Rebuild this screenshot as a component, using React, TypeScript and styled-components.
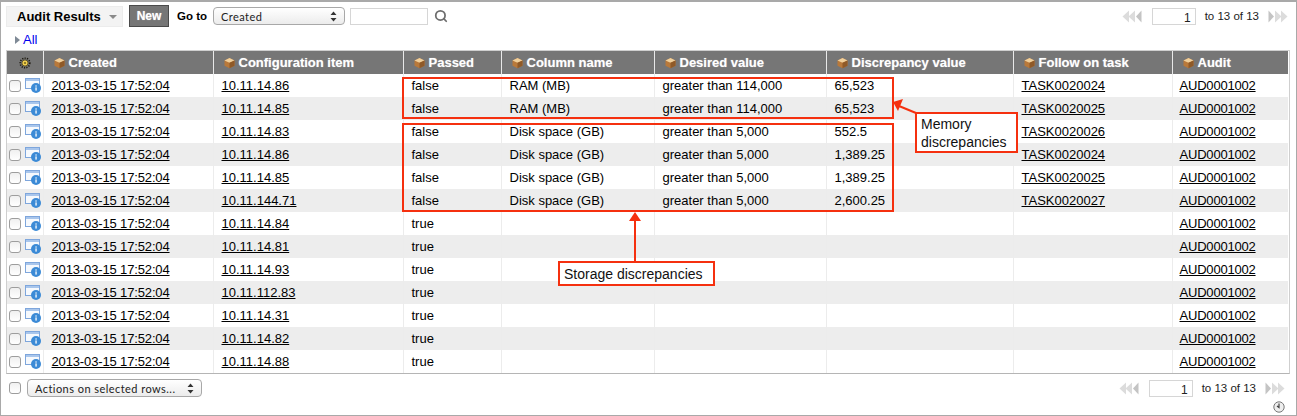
import React from 'react';
import styled, { createGlobalStyle } from 'styled-components';
import { Search } from 'lucide-react';

const GlobalStyle = createGlobalStyle`
  html, body { margin: 0; padding: 0; background: #fff; }
  body { font-family: "Liberation Sans", Arial, sans-serif; font-size: 13px; color: #000; }
`;

interface AuditRow {
  ci: string;
  passed: string;
  column?: string;
  desired?: string;
  discrepancy?: string;
  task?: string;
}

const rows: AuditRow[] = [
  { ci: '10.11.14.86', passed: 'false', column: 'RAM (MB)', desired: 'greater than 114,000', discrepancy: '65,523', task: 'TASK0020024' },
  { ci: '10.11.14.85', passed: 'false', column: 'RAM (MB)', desired: 'greater than 114,000', discrepancy: '65,523', task: 'TASK0020025' },
  { ci: '10.11.14.83', passed: 'false', column: 'Disk space (GB)', desired: 'greater than 5,000', discrepancy: '552.5', task: 'TASK0020026' },
  { ci: '10.11.14.86', passed: 'false', column: 'Disk space (GB)', desired: 'greater than 5,000', discrepancy: '1,389.25', task: 'TASK0020024' },
  { ci: '10.11.14.85', passed: 'false', column: 'Disk space (GB)', desired: 'greater than 5,000', discrepancy: '1,389.25', task: 'TASK0020025' },
  { ci: '10.11.144.71', passed: 'false', column: 'Disk space (GB)', desired: 'greater than 5,000', discrepancy: '2,600.25', task: 'TASK0020027' },
  { ci: '10.11.14.84', passed: 'true' },
  { ci: '10.11.14.81', passed: 'true' },
  { ci: '10.11.14.93', passed: 'true' },
  { ci: '10.11.112.83', passed: 'true' },
  { ci: '10.11.14.31', passed: 'true' },
  { ci: '10.11.14.82', passed: 'true' },
  { ci: '10.11.14.88', passed: 'true' },
];

const columns = ['Created', 'Configuration item', 'Passed', 'Column name', 'Desired value', 'Discrepancy value', 'Follow on task', 'Audit'];
const widths = [36, 170, 190, 98, 153, 172, 187, 159, 116];

const BoxIcon = () => (
  <svg width="11" height="12" viewBox="0 0 11 12">
    <path d="M5.5 1 L10.5 3.4 V8.8 L5.5 11.3 L.5 8.8 V3.4 Z" fill="#b9793a" />
    <path d="M5.5 1 L10.5 3.4 L5.5 5.8 L.5 3.4 Z" fill="#f0cf9a" />
    <path d="M5.5 5.8 L10.5 3.4 V8.8 L5.5 11.3 Z" fill="#8f5a28" />
  </svg>
);

const GearIcon = () => (
  <svg width="12" height="12" viewBox="0 0 12 12">
    <circle cx="6" cy="6" r="4.8" fill="none" stroke="#1d1a10" strokeWidth="1.6" strokeDasharray="1.2 1.2" />
    <circle cx="6" cy="6" r="3.1" fill="#f2d050" stroke="#2e2810" strokeWidth=".7" />
    <circle cx="6" cy="6" r="1.1" fill="#77681f" />
  </svg>
);

const RecordIcon = () => (
  <svg width="16" height="15" viewBox="0 0 16 15">
    <rect x=".5" y=".5" width="14" height="10" fill="#f6f9fd" stroke="#7ea6dc" />
    <rect x="1" y="1" width="13" height="2" fill="#a9c6ec" />
    <circle cx="11" cy="10" r="5" fill="#3b8ad6" />
    <rect x="10.4" y="9.4" width="1.3" height="3.2" fill="#fff" />
    <rect x="10.4" y="7.4" width="1.3" height="1.2" fill="#fff" />
  </svg>
);

const PagerArrows = ({ dir }: { dir: 'left' | 'right' }) => (
  <svg width="20" height="13" viewBox="0 0 20 13">
    {dir === 'left' ? (
      <>
        <path d="M7 .5 V12.5 L.5 6.5 Z M13 .5 V12.5 L6.5 6.5 Z" fill="#dcdcdc" />
        <path d="M19.5 .5 V12.5 L14 6.5 Z" fill="#c4c4c4" />
      </>
    ) : (
      <>
        <path d="M.5 .5 V12.5 L6 6.5 Z" fill="#c4c4c4" />
        <path d="M7 .5 V12.5 L13.5 6.5 Z M13 .5 V12.5 L19.5 6.5 Z" fill="#dcdcdc" />
      </>
    )}
  </svg>
);

const SelectCaret = () => (
  <svg width="7" height="11" viewBox="0 0 7 11">
    <path d="M3.5 .5 L6.5 4 H.5 Z M3.5 10.5 L.5 7 H6.5 Z" fill="#333" />
  </svg>
);

const Page = styled.div`
  position: relative;
  box-sizing: border-box;
  width: 1297px;
  height: 416px;
  border: 1px solid #a9a9a9;
  border-top-width: 2px;
  overflow: hidden;
`;

const TopBar = styled.div`
  display: flex;
  align-items: center;
  height: 26px;
  margin-top: 1px;
  padding: 0 5px;
`;

const TitleMenu = styled.div`
  display: flex;
  align-items: center;
  box-sizing: border-box;
  width: 117px;
  height: 21px;
  padding-left: 10px;
  background: #f3f3f3;
  border: 1px solid #ececec;
  font-size: 13px;
  font-weight: bold;
`;

const MenuCaret = styled.span`
  width: 0;
  height: 0;
  margin-left: 8px;
  margin-top: 2px;
  border-left: 4px solid transparent;
  border-right: 4px solid transparent;
  border-top: 4px solid #8a8a8a;
`;

const NewButton = styled.button`
  box-sizing: border-box;
  width: 40px;
  height: 22px;
  margin-left: 6px;
  padding: 0;
  background: #767676;
  border: 1px solid #4a4a4a;
  color: #fff;
  font: bold 12px "Liberation Sans", Arial, sans-serif;
  text-shadow: 0 0 1px rgba(255, 255, 255, 0.6);
`;

const GoTo = styled.span`
  width: 29px;
  margin-left: 8px;
  font-size: 11.5px;
  font-weight: bold;
  white-space: nowrap;
`;

const FakeSelect = styled.div<{ $width: number }>`
  display: flex;
  align-items: center;
  justify-content: space-between;
  box-sizing: border-box;
  width: ${(p) => p.$width}px;
  height: 18px;
  padding: 0 7px 0 7px;
  background: linear-gradient(#fff, #ececec);
  border: 1px solid #a8a8a8;
  border-radius: 4px;
  font-family: "Lato", "Liberation Sans", sans-serif;
  font-size: 11px;
  letter-spacing: .45px;
  color: #222;
`;

const GoToSelect = styled(FakeSelect)`
  margin-left: 7px;
`;

const SearchBox = styled.div`
  box-sizing: border-box;
  width: 78px;
  height: 17px;
  margin-left: 5px;
  background: #fff;
  border: 1px solid #d6d6d6;
`;

const SearchButton = styled.span`
  display: flex;
  margin-left: 6px;
  color: #6d6d6d;
`;

const Pager = styled.div`
  display: flex;
  align-items: center;
  margin-left: auto;
  margin-right: 3px;
  font-size: 11.5px;
  color: #222;
`;

const PageBox = styled.div`
  box-sizing: border-box;
  width: 44px;
  height: 17px;
  margin: 0 9px 0 10px;
  padding: 1px 4px 0 0;
  border: 1px solid #d6d6d6;
  text-align: right;
  font-size: 12px;
  line-height: 16px;
`;

const PagerLabel = styled.span`
  margin-right: 9px;
`;

const BreadcrumbRow = styled.div`
  display: flex;
  align-items: center;
  height: 21px;
  padding-left: 14px;
  font-size: 13px;
`;

const BreadcrumbArrow = styled.span`
  width: 0;
  height: 0;
  margin-right: 3px;
  border-top: 4px solid transparent;
  border-bottom: 4px solid transparent;
  border-left: 5px solid #7f8a96;
`;

const AllLink = styled.a`
  color: #0000ee;
  text-decoration: none;
`;

const TableFrame = styled.div`
  box-sizing: border-box;
  width: 1284px;
  margin-left: 5px;
  border: 1px solid #cfcfcf;
  border-bottom-color: #b5b5b5;
`;

const Table = styled.table`
  width: 1281px;
  table-layout: fixed;
  border-collapse: collapse;
`;

const HeaderCell = styled.th`
  box-sizing: border-box;
  height: 23px;
  padding: 0 0 0 10px;
  background: #767676;
  border-left: 1px solid #e8e8e8;
  color: #fff;
  font-size: 13px;
  font-weight: bold;
  text-align: left;
  white-space: nowrap;
  text-shadow: 0 0 1px rgba(255, 255, 255, 0.5);

  &:first-child {
    border-left: 0;
    padding: 0;
    text-align: center;
  }

  svg {
    vertical-align: -2px;
    margin-right: 4px;
  }

  &:first-child svg {
    margin: 0;
  }
`;

const BodyRow = styled.tr<{ $odd: boolean }>`
  background: ${(p) => (p.$odd ? '#ededed' : '#fff')};
`;

const Cell = styled.td`
  box-sizing: border-box;
  height: 23px;
  padding: 0 0 0 8px;
  border-left: 1px solid #ececec;
  font-size: 13px;
  white-space: nowrap;
  overflow: hidden;

  &:first-child {
    border-left: 0;
    padding: 0 0 0 2px;
  }

  a {
    color: #000;
    text-decoration: underline;
  }
`;

const DateLink = styled.a`
  letter-spacing: -0.14px;
`;

const AuditLink = styled.a`
  margin-left: -1px;
  letter-spacing: -0.2px;
`;

const RowTools = styled.div`
  display: flex;
  align-items: center;
  gap: 4px;
`;

const Check = styled.span`
  display: inline-block;
  flex: none;
  box-sizing: border-box;
  width: 12px;
  height: 12px;
  background: linear-gradient(#f0f0f0, #fff);
  border: 1px solid #9d9d9d;
  border-radius: 3px;
`;

const BottomBar = styled.div`
  display: flex;
  align-items: center;
  height: 26px;
  margin-top: 1px;
  padding: 0 5px 0 8px;
`;

const ActionsSelect = styled(FakeSelect)`
  margin-left: 6px;
`;

const BottomPager = styled(Pager)`
  margin-right: 6px;
`;

const ClockIcon = styled.div`
  display: flex;
  justify-content: flex-end;
  padding-right: 11px;
`;

const Callout = styled.div<{ $left: number; $top: number; $width: number; $height: number }>`
  position: absolute;
  left: ${(p) => p.$left}px;
  top: ${(p) => p.$top}px;
  width: ${(p) => p.$width}px;
  height: ${(p) => p.$height}px;
  box-sizing: border-box;
  border: 2px solid #f5300f;
`;

const CalloutLabel = styled(Callout)`
  display: flex;
  align-items: center;
  padding-left: 4px;
  background: #fff;
  font-size: 14px;
  line-height: 18px;
  color: #111;
`;

const ArrowLayer = styled.svg`
  position: absolute;
  left: -1px;
  top: -2px;
`;

export default function App() {
  return (
    <>
      <GlobalStyle />
      <Page>
        <TopBar>
          <TitleMenu>
            Audit Results
            <MenuCaret />
          </TitleMenu>
          <NewButton>New</NewButton>
          <GoTo>Go to</GoTo>
          <GoToSelect $width={132}>
            Created
            <SelectCaret />
          </GoToSelect>
          <SearchBox />
          <SearchButton>
            <Search size={14} strokeWidth={3} />
          </SearchButton>
          <Pager>
            <PagerArrows dir="left" />
            <PageBox>1</PageBox>
            <PagerLabel>to 13 of 13</PagerLabel>
            <PagerArrows dir="right" />
          </Pager>
        </TopBar>
        <BreadcrumbRow>
          <BreadcrumbArrow />
          <AllLink>All</AllLink>
        </BreadcrumbRow>
        <TableFrame>
          <Table>
            <colgroup>
              {widths.map((w, i) => (
                <col key={i} style={{ width: w }} />
              ))}
            </colgroup>
            <thead>
              <tr>
                <HeaderCell>
                  <GearIcon />
                </HeaderCell>
                {columns.map((c) => (
                  <HeaderCell key={c}>
                    <BoxIcon />
                    {c}
                  </HeaderCell>
                ))}
              </tr>
            </thead>
            <tbody>
              {rows.map((r, i) => (
                <BodyRow key={i} $odd={i % 2 === 1}>
                  <Cell>
                    <RowTools>
                      <Check />
                      <RecordIcon />
                    </RowTools>
                  </Cell>
                  <Cell><DateLink>2013-03-15 17:52:04</DateLink></Cell>
                  <Cell><a>{r.ci}</a></Cell>
                  <Cell>{r.passed}</Cell>
                  <Cell>{r.column}</Cell>
                  <Cell>{r.desired}</Cell>
                  <Cell>{r.discrepancy}</Cell>
                  <Cell>{r.task && <a>{r.task}</a>}</Cell>
                  <Cell><AuditLink>AUD0001002</AuditLink></Cell>
                </BodyRow>
              ))}
            </tbody>
          </Table>
        </TableFrame>
        <BottomBar>
          <Check />
          <ActionsSelect $width={175}>
            Actions on selected rows...
            <SelectCaret />
          </ActionsSelect>
          <BottomPager>
            <PagerArrows dir="left" />
            <PageBox>1</PageBox>
            <PagerLabel>to 13 of 13</PagerLabel>
            <PagerArrows dir="right" />
          </BottomPager>
        </BottomBar>
        <ClockIcon>
          <svg width="12" height="12" viewBox="0 0 12 12">
            <circle cx="6" cy="6" r="5.2" fill="#eee" stroke="#777" />
            <path d="M6 2.5 V6.5 L4 5" fill="none" stroke="#444" strokeWidth="1.2" />
          </svg>
        </ClockIcon>

        <Callout $left={401} $top={75} $width={492} $height={42} />
        <Callout $left={401} $top={121} $width={492} $height={89} />
        <CalloutLabel $left={914} $top={110} $width={103} $height={41}>
          Memory
          <br />
          discrepancies
        </CalloutLabel>
        <CalloutLabel $left={557} $top={259} $width={157} $height={25}>
          Storage discrepancies
        </CalloutLabel>
        <ArrowLayer width="1297" height="416" viewBox="0 0 1297 416">
          <path d="M635 220 V261" stroke="#f5300f" strokeWidth="2" />
          <path d="M635 212 L641 221 H629 Z" fill="#f5300f" />
          <path d="M916 113 L899 106" stroke="#f5300f" strokeWidth="2" />
          <path d="M893 102 L903 99 L898 111 Z" fill="#f5300f" />
        </ArrowLayer>
      </Page>
    </>
  );
}
